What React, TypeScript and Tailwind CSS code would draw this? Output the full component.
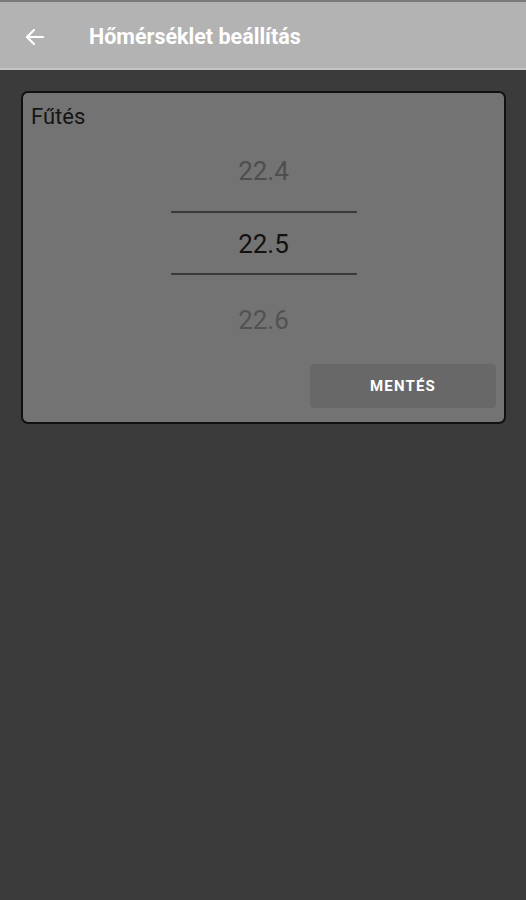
import React from 'react';

const ArrowLeft = () => (
  <svg width="24" height="24" viewBox="0 0 24 24" fill="none" stroke="#ffffff" strokeWidth="2.2" strokeLinecap="round" strokeLinejoin="round">
    <path d="M20 12H4" />
    <path d="M11 5l-7 7 7 7" />
  </svg>
);

export default function App() {
  const values = ['22.4', '22.5', '22.6'];

  return (
    <div className="w-[526px] h-[900px] bg-[#3b3b3b] flex flex-col" style={{ fontFamily: 'Roboto, "Noto Sans", sans-serif' }}>
      <div className="h-[2px] bg-[#7a7a7a]" />
      <header className="h-[68px] bg-[#b3b3b3] border-b-2 border-[#c4c4c4] flex items-center px-[23px] pt-[4px]">
        <ArrowLeft />
        <h1 className="ml-[42px] text-[21.5px] font-bold text-white">Hőmérséklet beállítás</h1>
      </header>

      <div className="pl-[21px] pr-[20px] pt-[21px]">
        <div className="bg-[#737373] border-2 border-[#111111] rounded-[7px] px-[8px] pt-[10px] pb-[14px] flex flex-col">
          <div className="text-[22px] text-[#151515] leading-[28px]">Fűtés</div>

          <div className="flex flex-col items-center mt-[16px]">
            <div className="h-[64px] leading-[48px] text-[26px] text-[#4e4e4e]">{values[0]}</div>
            <div className="w-[186px] h-[64px] pt-[3px] border-y-2 border-[#3a3a3a] flex items-center justify-center text-[26px] text-[#111111]">
              {values[1]}
            </div>
            <div className="h-[89px] leading-[90px] text-[26px] text-[#525252]">{values[2]}</div>
          </div>

          <div className="flex justify-end">
            <button className="w-[186px] h-[44px] bg-[#686868] rounded-[4px] text-white text-[15px] font-bold tracking-[1.2px]">
              MENTÉS
            </button>
          </div>
        </div>
      </div>
    </div>
  );
}
